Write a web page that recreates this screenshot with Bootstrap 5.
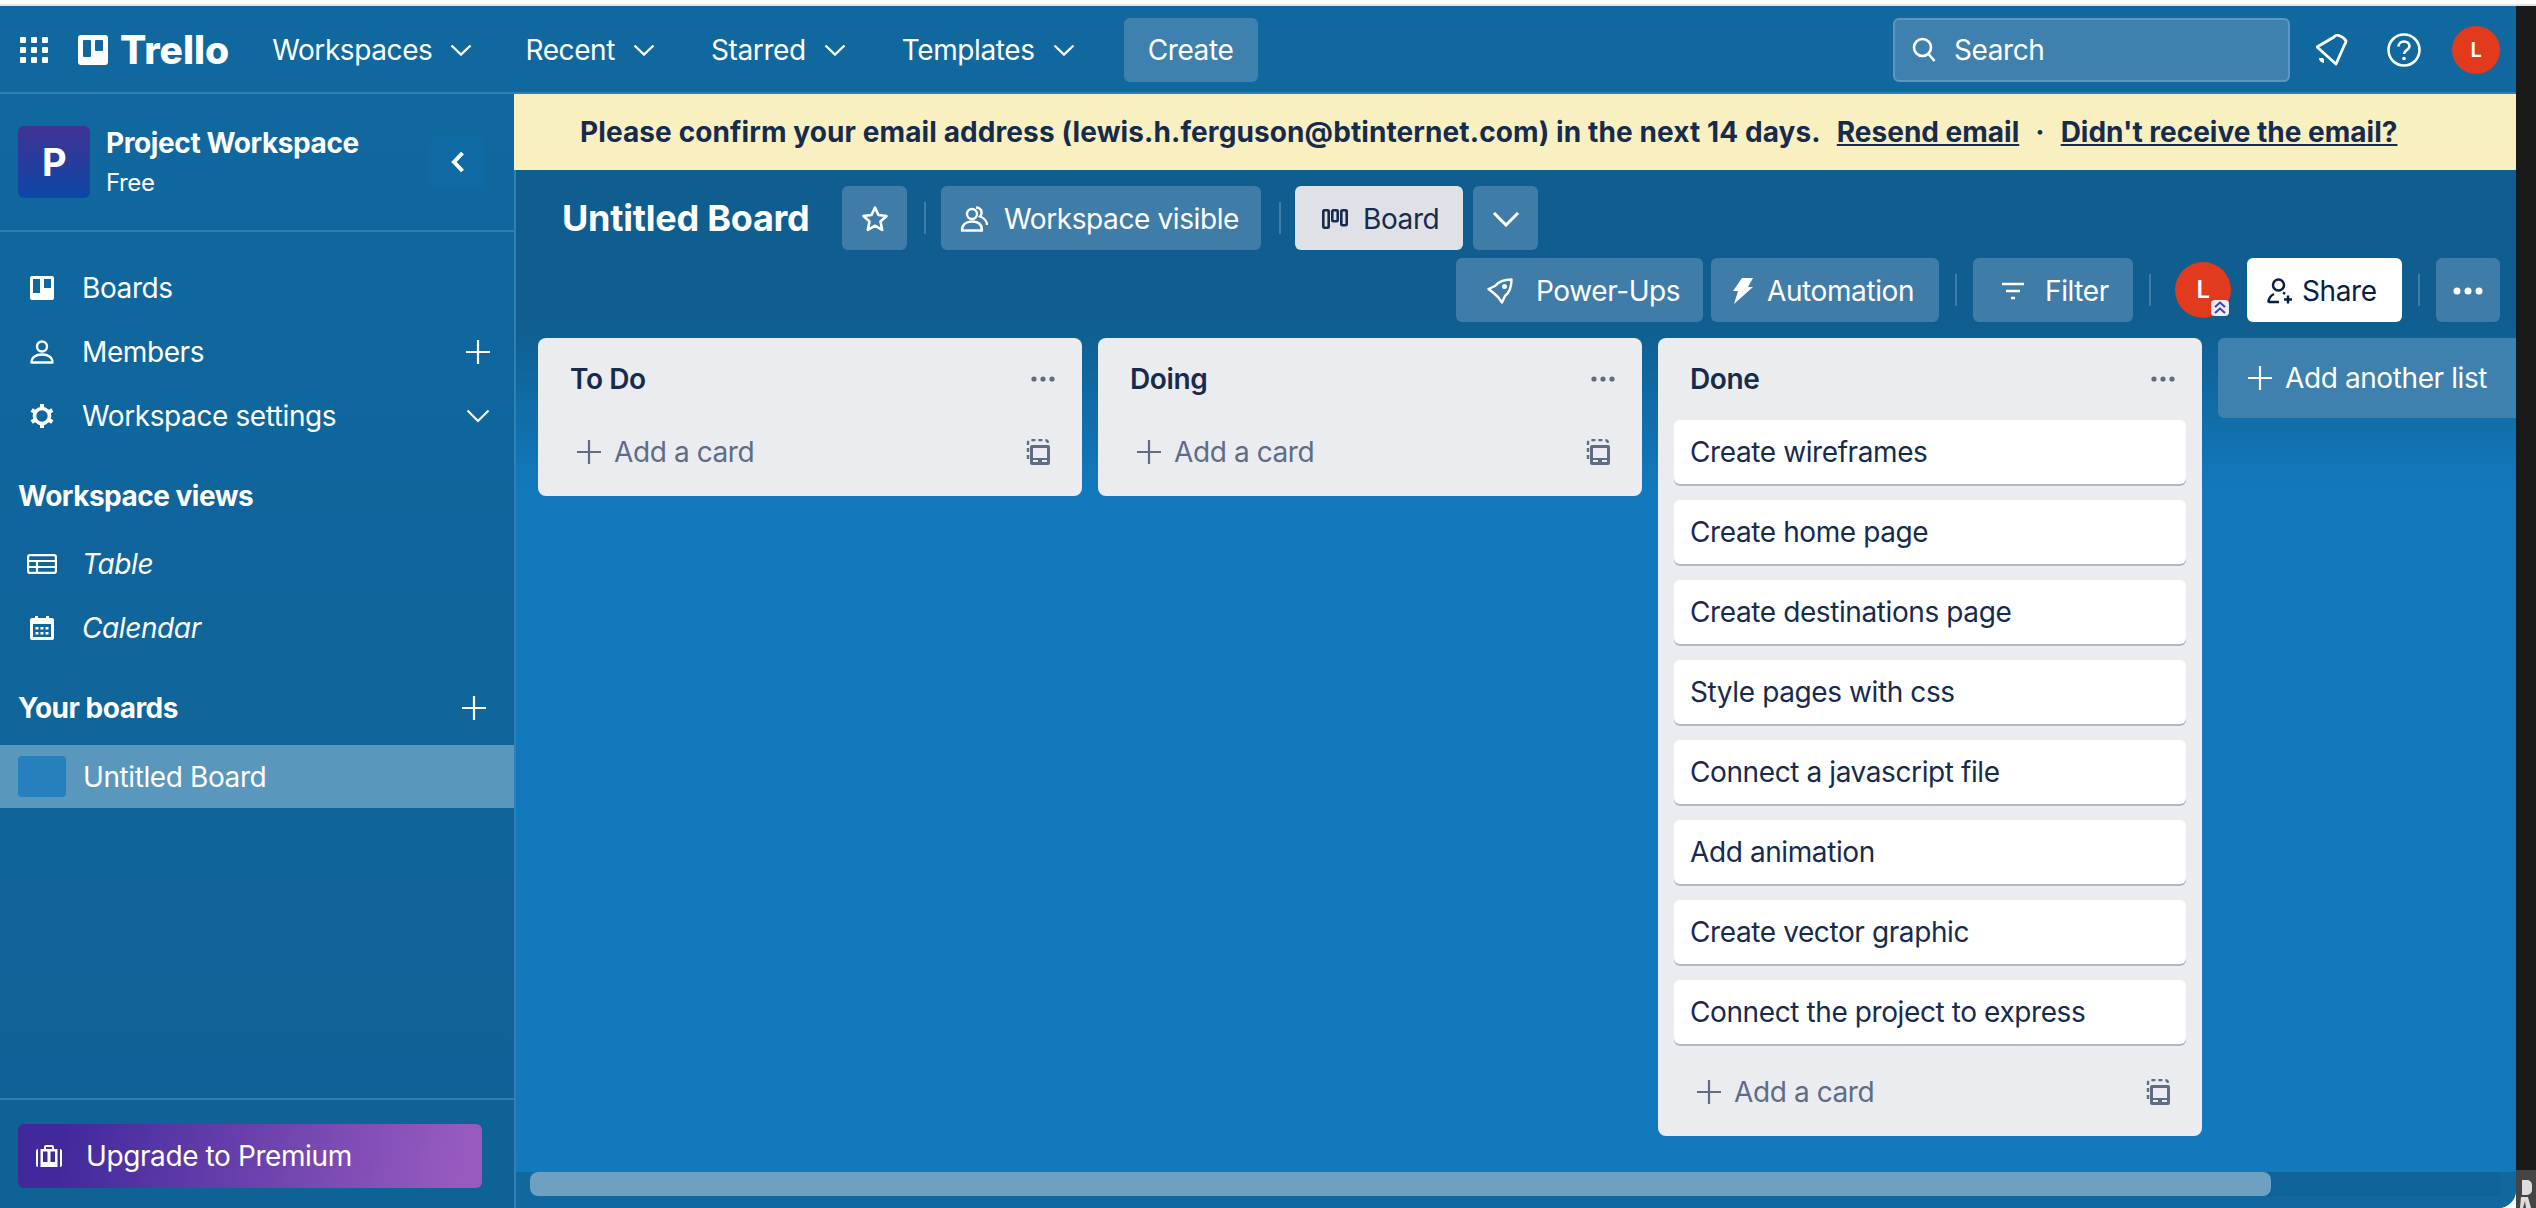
<!DOCTYPE html>
<html lang="en">
<head>
    <meta charset="UTF-8">
    <meta name="viewport" content="width=device-width, initial-scale=1.0">
    <title>Untitled Board | Trello</title>
    <link href="https://cdn.jsdelivr.net/npm/bootstrap@5.3.0/dist/css/bootstrap.min.css" rel="stylesheet">
    <style>
        html, body { height: 100%; }
        body { font-family: Inter, "Liberation Sans", sans-serif; font-size: 28px; line-height: 40px; letter-spacing: -0.4px; color: #fff; background: #fff; overflow: hidden; }
        button { letter-spacing: inherit; }
        svg { display: block; flex-shrink: 0; }
        .top-strip { height: 6px; border-top: 4px solid #fff; background: #e4e4e4; flex-shrink: 0; }
        .shell { height: 1202px; }
        .app { width: 2516px; background: #10679f; border-bottom-right-radius: 18px; overflow: hidden; }
        .side-strip { width: 20px; background: #1a1a1a; }
        .side-foot { height: 38px; background: #454545; padding: 10px 0 0 4px; }

        .topbar { height: 88px; padding: 2px 16px 0 20px; background: #10689f; border-bottom: 2px solid #2f7fb0; flex-shrink: 0; flex-wrap: nowrap; }
        .brand { margin-left: 30px; margin-right: 43px; padding: 0; color: #fff; font-size: 39px; font-weight: 800; line-height: 40px; letter-spacing: 0; gap: 12px; }
        .brand:hover { color: #fff; }
        .menu-item { color: #fff; margin-right: 56px; gap: 18px; padding: 0; }
        .menu-item:hover { color: #fff; }
        .brand + .menu-item { margin-right: 53px; }
        .create-btn { width: 134px; height: 64px; margin-left: -7px; background: #3f81ae; color: #fff; border: 0; border-radius: 6px; font-size: 28px; padding: 0; }
        .search-box { width: 397px; height: 64px; background: #3f81ae; border: 2px solid #5d97c1; border-radius: 6px; padding-left: 17px; gap: 18px; margin-right: 26px; }
        .bell-wrap { margin-right: 39px; }
        .help-wrap { margin-right: 31px; }
        .avatar-dot { background: #e13a1c; color: #fff; border-radius: 50%; font-weight: 600; }
        .avatar-top { width: 48px; height: 48px; font-size: 20px; }
        .avatar-board { width: 56px; height: 56px; font-size: 24px; margin: 0 16px 0 24px; position: relative; }
        .avatar-badge { position: absolute; right: 2px; bottom: 2px; width: 18px; height: 16px; background: #e9ecf3; border-radius: 4px; }

        .sidebar { width: 514px; background: linear-gradient(180deg, #10689f, #0f6296); flex-shrink: 0; }
        .ws-head { height: 138px; padding: 32px 28px 0 18px; border-bottom: 2px solid #2f7fb0; flex-shrink: 0; }
        .ws-tile { width: 72px; height: 72px; border-radius: 6px; background: linear-gradient(180deg, #403294, #0c47a6); font-size: 38px; font-weight: 700; }
        .ws-name { margin: -3px 0 0 16px; }
        .ws-title { font-weight: 700; line-height: 40px; }
        .ws-plan { font-size: 24px; line-height: 40px; }
        .collapse-btn { width: 56px; height: 56px; margin-top: 8px; background: #0f69a3; border-radius: 6px; }
        .side-list { padding-top: 24px; }
        .side-row { height: 64px; padding: 0 24px 0 30px; color: #fff; gap: 28px; background: transparent; border: 0; border-radius: 0; font-size: 28px; }
        .side-row .list-tail { margin-left: auto; }
        .side-head { height: 64px; padding: 0 28px 0 18px; font-weight: 700; margin-top: 16px; letter-spacing: -0.5px; }
        .views-list { margin-top: 4px; }
        .view-name { font-style: italic; }
        .board-row { height: 63px; margin-top: 5px; padding-left: 18px; gap: 17px; background: #5a97bd; }
        .board-tile { width: 48px; height: 41px; background: #2680bd; border-radius: 4px; }
        .side-foot-box { border-top: 2px solid #2f7fb0; padding: 24px 18px 20px; margin-top: auto; }
        .premium-btn { height: 64px; width: 464px; border: 0; border-radius: 6px; background: linear-gradient(100deg, #42299b 10%, #975bc0 95%); color: #fff; font-size: 28px; padding: 0 0 0 18px; gap: 24px; }

        .verify-bar { height: 76px; padding-left: 66px; background: #f9f0c2; color: #172b4d; font-weight: 700; letter-spacing: 0; flex-shrink: 0; white-space: nowrap; }
        .verify-bar a { color: #172b4d; }
        .verify-bar .dot-sep { margin: 0 16px; }
        .verify-bar .gap-link { margin-left: 16px; }
        .verify-bar .lead-text { letter-spacing: 0.1px; }
        .main-col { background: #10689f; min-width: 0; }
        .board-body { border-left: 2px solid #2f80b5; min-height: 0; }
        .board-head { padding: 16px 16px 0 46px; background: #0f5e8f; flex-shrink: 0; }
        .head-row { height: 64px; gap: 8px; }
        .head-row.second { margin-top: 8px; justify-content: flex-end; gap: 0; }
        .board-name { font-size: 36px; font-weight: 700; line-height: 64px; letter-spacing: -0.25px; margin: 0 24px 0 0; width: 248px; white-space: nowrap; }
        .tool-btn { height: 64px; background: #3f7da8; color: #fff; border: 0; border-radius: 6px; font-size: 28px; padding: 1px 0 0; white-space: nowrap; }
        .tool-btn:hover { background: #3f7da8; color: #fff; }
        .tool-sep { width: 2px; height: 32px; background: #3f7da8; flex-shrink: 0; }
        .star-btn { width: 65px; margin-right: 9px; }
        .wv-btn { width: 320px; padding-left: 19px; gap: 16px; margin: 0 10px 0 7px; }
        .view-btn { width: 168px; padding-left: 27px; gap: 15px; margin-left: 6px; background: #dfe1e6; color: #172b4d; }
        .view-btn:hover { background: #dfe1e6; color: #172b4d; }
        .drop-btn { width: 65px; margin-left: 2px; }
        .power-btn { width: 247px; padding-left: 31px; gap: 23px; margin-right: 8px; }
        .auto-btn { width: 228px; padding-left: 22px; gap: 14px; margin-right: 16px; }
        .filter-btn { width: 160px; padding-left: 28px; gap: 20px; margin-left: 16px; }
        .share-btn { width: 155px; padding-left: 20px; gap: 9px; margin-right: 16px; }
        .share-btn, .share-btn:hover { background: #fff; color: #091e42; }
        .more-btn { width: 64px; margin-left: 16px; }

        .canvas { flex: 1 1 auto; min-height: 0; padding: 16px 0 0 22px; gap: 16px; overflow: hidden; background: linear-gradient(180deg, #0f5e8f 0, #1279bd 170px); }
        .board-list { width: 544px; flex-shrink: 0; background: #ebecf0; border: 0; border-radius: 8px; color: #172b4d; padding: 0 16px 12px; }
        .list-title { height: 82px; padding: 0 11px 0 16px; font-weight: 600; }
        .list-cards { gap: 16px; margin-bottom: 16px; }
        .task-card { height: 64px; padding: 0 16px; border: 0; border-radius: 6px; background: #fff; box-shadow: 0 2px 0 #b3b7c6; color: #172b4d; flex-direction: row; align-items: center; }
        .add-card { height: 64px; padding: 0 16px 0 23px; color: #5e6c84; gap: 13px; }
        .add-card svg:last-child { margin-left: auto; }
        .add-list { width: 544px; height: 80px; flex-shrink: 0; background: #3f81ae; border: 0; border-radius: 6px; color: #fff; font-size: 28px; padding: 0 0 0 30px; gap: 13px; justify-content: flex-start; }
        .add-list:hover { background: #3f81ae; color: #fff; }
        .scroll-track { height: 24px; margin: 0 16px 12px 14px; background: #0f6399; border-radius: 8px; flex-shrink: 0; }
        .scroll-thumb { width: 1741px; height: 24px; background: #6ea1c1; border-radius: 8px; }
    </style>
</head>
<body class="d-flex flex-column">
    <div class="top-strip"></div>
    <div class="shell d-flex">
        <div class="app d-flex flex-column">
            <nav class="navbar topbar d-flex align-items-center justify-content-start">
                <svg width="28" height="26" viewBox="0 0 28 26" fill="#fff"><rect x="0" y="0" width="6" height="6" rx="1"/><rect x="11" y="0" width="6" height="6" rx="1"/><rect x="22" y="0" width="6" height="6" rx="1"/><rect x="0" y="10" width="6" height="6" rx="1"/><rect x="11" y="10" width="6" height="6" rx="1"/><rect x="22" y="10" width="6" height="6" rx="1"/><rect x="0" y="20" width="6" height="6" rx="1"/><rect x="11" y="20" width="6" height="6" rx="1"/><rect x="22" y="20" width="6" height="6" rx="1"/></svg>
                <a class="navbar-brand brand d-flex align-items-center" href="#">
                    <svg width="30" height="30" viewBox="0 0 30 30"><path fill="#fff" fill-rule="evenodd" d="M3 0h24a3 3 0 0 1 3 3v24a3 3 0 0 1-3 3H3a3 3 0 0 1-3-3V3a3 3 0 0 1 3-3zM6 5a1 1 0 0 0-1 1v15a1 1 0 0 0 1 1h6a1 1 0 0 0 1-1V6a1 1 0 0 0-1-1zM18 5a1 1 0 0 0-1 1v9a1 1 0 0 0 1 1h6a1 1 0 0 0 1-1V6a1 1 0 0 0-1-1z"/></svg>
                    Trello
                </a>
                <a class="nav-link menu-item d-flex align-items-center" href="#">Workspaces <svg width="22" height="12" viewBox="0 0 22 12" fill="none" stroke="#fff" stroke-width="2.4"><path d="M1.5 1.5 11 10.5l9.5-9"/></svg></a>
                <a class="nav-link menu-item d-flex align-items-center" href="#">Recent <svg width="22" height="12" viewBox="0 0 22 12" fill="none" stroke="#fff" stroke-width="2.4"><path d="M1.5 1.5 11 10.5l9.5-9"/></svg></a>
                <a class="nav-link menu-item d-flex align-items-center" href="#">Starred <svg width="22" height="12" viewBox="0 0 22 12" fill="none" stroke="#fff" stroke-width="2.4"><path d="M1.5 1.5 11 10.5l9.5-9"/></svg></a>
                <a class="nav-link menu-item d-flex align-items-center" href="#">Templates <svg width="22" height="12" viewBox="0 0 22 12" fill="none" stroke="#fff" stroke-width="2.4"><path d="M1.5 1.5 11 10.5l9.5-9"/></svg></a>
                <button class="btn create-btn">Create</button>
                <div class="search-box d-flex align-items-center ms-auto">
                    <svg width="24" height="26" viewBox="0 0 24 26" fill="none" stroke="#fff" stroke-width="2.6"><circle cx="10.5" cy="10.5" r="8.5"/><path d="m16.5 17 6 7"/></svg>
                    <span>Search</span>
                </div>
                <div class="bell-wrap">
                    <svg width="32" height="32" viewBox="0 0 32 32" fill="none" stroke="#fff" stroke-width="2.8" stroke-linejoin="round"><path d="M1 13 18 3c1-2 4-2 6-1 3 1 5 3 6 5 0 2-1 3-2 5l-8 18z"/><path d="M5 24a3 3 0 0 0 3 3" stroke-width="4"/></svg>
                </div>
                <div class="help-wrap">
                    <svg width="34" height="34" viewBox="0 0 34 34" fill="none" stroke="#fff" stroke-width="2.6"><circle cx="17" cy="17" r="15.5"/><path d="M11.5 13.5c0-3 2.500-5 5.500-5s5.500 2 5.500 4.800c0 4-5.500 3.700-5.500 7.700"/><circle cx="17" cy="25.500" r="1.800" fill="#fff" stroke="none"/></svg>
                </div>
                <div class="avatar-dot avatar-top d-flex align-items-center justify-content-center">L</div>
            </nav>
            <div class="d-flex flex-grow-1" style="min-height:0">
                <aside class="sidebar d-flex flex-column">
                    <div class="ws-head d-flex align-items-start">
                        <div class="ws-tile d-flex align-items-center justify-content-center">P</div>
                        <div class="ws-name">
                            <div class="ws-title">Project Workspace</div>
                            <div class="ws-plan">Free</div>
                        </div>
                        <div class="collapse-btn d-flex align-items-center justify-content-center ms-auto">
                            <svg width="14" height="22" viewBox="0 0 14 22" fill="none" stroke="#fff" stroke-width="4"><path d="M11.500 2 3 11l8.500 9"/></svg>
                        </div>
                    </div>
                    <div class="list-group side-list">
                        <a class="list-group-item side-row d-flex align-items-center" href="#">
                            <svg width="24" height="24" viewBox="0 0 24 24"><path fill="#fff" fill-rule="evenodd" d="M2 0h20a2 2 0 0 1 2 2v20a2 2 0 0 1-2 2H2a2 2 0 0 1-2-2V2a2 2 0 0 1 2-2zM3 3v14h7V3zM14 3v9h7V3z"/></svg>
                            <span>Boards</span>
                        </a>
                        <a class="list-group-item side-row d-flex align-items-center" href="#">
                            <svg width="24" height="24" viewBox="0 0 24 24" fill="none" stroke="#fff" stroke-width="2.400"><circle cx="12" cy="6.500" r="5"/><path d="M1.500 22.500c0-5 4-8 10.500-8s10.500 3 10.500 8z" stroke-linejoin="round"/></svg>
                            <span>Members</span>
                            <svg class="list-tail" width="24" height="24" viewBox="0 0 24 24" stroke="#fff" stroke-width="2.200"><path d="M12 0v24M0 12h24"/></svg>
                        </a>
                        <a class="list-group-item side-row d-flex align-items-center" href="#">
                            <svg width="24" height="24" viewBox="0 0 24 24" fill="none" stroke="#fff"><circle cx="12" cy="12" r="7.500" stroke-width="3.600"/><path stroke-width="4" d="M12 0v4M12 20v4M1.600 6l3.500 2M18.900 16l3.500 2M1.600 18l3.500-2M18.900 8l3.500-2"/></svg>
                            <span>Workspace settings</span>
                            <svg class="list-tail" width="24" height="14" viewBox="0 0 24 14" fill="none" stroke="#fff" stroke-width="2.200"><path d="M1.500 1.500 12 12 22.500 1.500"/></svg>
                        </a>
                    </div>
                    <div class="side-head d-flex align-items-center">Workspace views</div>
                    <div class="list-group views-list">
                        <a class="list-group-item side-row d-flex align-items-center" href="#">
                            <svg width="30" height="20" viewBox="0 0 30 20" fill="none" stroke="#fff" stroke-width="2.200" style="margin-left:-3px;margin-right:-3px"><rect x="1.100" y="1.100" width="27.800" height="17.800" rx="2"/><path d="M1 7h28M1 13h28M10 7v12" /></svg>
                            <span class="view-name">Table</span>
                        </a>
                        <a class="list-group-item side-row d-flex align-items-center" href="#">
                            <svg width="24" height="24" viewBox="0 0 24 24"><path fill="#fff" fill-rule="evenodd" d="M5 0h3v2h8V0h3v2h3a2 2 0 0 1 2 2v18a2 2 0 0 1-2 2H2a2 2 0 0 1-2-2V4a2 2 0 0 1 2-2h3zM3 8v13h18V8zM5.500 11h3v2.500h-3zM10.500 11h3v2.500h-3zM15.500 11h3v2.500h-3zM5.500 16h3v2.500h-3zM10.500 16h3v2.500h-3zM15.500 16h3v2.500h-3z"/></svg>
                            <span class="view-name">Calendar</span>
                        </a>
                    </div>
                    <div class="side-head d-flex align-items-center justify-content-between">
                        <span>Your boards</span>
                        <svg width="24" height="24" viewBox="0 0 24 24" stroke="#fff" stroke-width="2.200"><path d="M12 0v24M0 12h24"/></svg>
                    </div>
                    <a class="side-row board-row d-flex align-items-center text-decoration-none" href="#">
                        <div class="board-tile"></div>
                        <span>Untitled Board</span>
                    </a>
                    <div class="side-foot-box">
                        <button class="btn premium-btn d-flex align-items-center">
                            <svg width="26" height="22" viewBox="0 0 26 22"><path fill="#fff" fill-rule="evenodd" d="M8 2a2 2 0 0 1 2-2h6a2 2 0 0 1 2 2v2h3.500v18h-17V4H8zM10 2v2h6V2zM7 6.500V17h4.500V6.500zM14.500 6.500V17H19V6.500z"/><path fill="#fff" d="M0 6a2 2 0 0 1 2-2v18a2 2 0 0 1-2-2zM26 6a2 2 0 0 0-2-2v18a2 2 0 0 0 2-2z"/></svg>
                            <span>Upgrade to Premium</span>
                        </button>
                    </div>
                </aside>
                <main class="main-col d-flex flex-column flex-grow-1">
                    <div class="verify-bar d-flex align-items-center">
                        <span class="lead-text">Please confirm your email address (lewis.h.ferguson@btinternet.com) in the next 14 days.</span>
                        <a class="gap-link" href="#">Resend email</a>
                        <span class="dot-sep">·</span>
                        <a href="#">Didn't receive the email?</a>
                    </div>
                    <div class="board-body d-flex flex-column flex-grow-1">
                        <div class="board-head">
                            <div class="head-row d-flex align-items-center">
                                <h1 class="board-name">Untitled Board</h1>
                                <button class="btn tool-btn star-btn d-flex align-items-center justify-content-center">
                                    <svg width="28" height="28" viewBox="0 0 28 28" fill="none" stroke="#fff" stroke-width="2.600" stroke-linejoin="round"><path d="m14 2.500 3.500 7.500 8 1-6 5.500 1.700 8.500-7.200-4.300L6.800 25l1.700-8.500-6-5.500 8-1z"/></svg>
                                </button>
                                <div class="tool-sep"></div>
                                <button class="btn tool-btn wv-btn d-flex align-items-center">
                                    <svg width="28" height="26" viewBox="0 0 28 26" fill="none" stroke="#fff" stroke-width="2.400"><circle cx="12" cy="8" r="5"/><path d="M2 24.500c0-6 4-9 10-9s10 3 10 9z" stroke-linejoin="round"/><path d="M16 1.500c4 0 6 3 5.500 6-.2 1.500-1 2.500-1.500 3 4 1.500 7 5 7 8.500"/></svg>
                                    <span>Workspace visible</span>
                                </button>
                                <div class="tool-sep"></div>
                                <button class="btn tool-btn view-btn d-flex align-items-center">
                                    <svg width="26" height="20" viewBox="0 0 26 20" fill="none" stroke="#172b4d" stroke-width="2.600"><rect x="1.300" y="1.300" width="5.400" height="17.400" rx="1"/><rect x="10.300" y="1.300" width="5.400" height="11" rx="1"/><rect x="19.300" y="1.300" width="5.400" height="15" rx="1"/></svg>
                                    <span>Board</span>
                                </button>
                                <button class="btn tool-btn drop-btn d-flex align-items-center justify-content-center">
                                    <svg width="28" height="16" viewBox="0 0 28 16" fill="none" stroke="#fff" stroke-width="3"><path d="M2 2 14 14 26 2"/></svg>
                                </button>
                            </div>
                            <div class="head-row second d-flex align-items-center">
                                <button class="btn tool-btn power-btn d-flex align-items-center">
                                    <svg width="26" height="26" viewBox="0 0 26 26" fill="none" stroke="#fff" stroke-width="2.400" stroke-linejoin="round"><path d="M1.500 11 8 8C12 3 18 1.500 24.500 1.500 24.500 8 23 14 18 18l-3 6.500-4-5.500-5-4.500z"/><circle cx="17.500" cy="8.500" r="1.300" fill="#fff"/></svg>
                                    <span>Power-Ups</span>
                                </button>
                                <button class="btn tool-btn auto-btn d-flex align-items-center">
                                    <svg width="20" height="26" viewBox="0 0 20 26" fill="#fff"><path d="M9 0h11l-5 9h5L1 26l4-13H0z"/></svg>
                                    <span>Automation</span>
                                </button>
                                <div class="tool-sep"></div>
                                <button class="btn tool-btn filter-btn d-flex align-items-center">
                                    <svg width="24" height="20" viewBox="0 0 24 20" stroke="#fff" stroke-width="2.600"><path d="M1 3h22M5 10h14M10 17h4"/></svg>
                                    <span>Filter</span>
                                </button>
                                <div class="tool-sep ms-3"></div>
                                <div class="avatar-dot avatar-board d-flex align-items-center justify-content-center">
                                    L
                                    <div class="avatar-badge d-flex align-items-center justify-content-center">
                                        <svg width="14" height="14" viewBox="0 0 14 14" fill="none" stroke="#3d3fb5" stroke-width="2"><path d="m2 6 5-4.500L12 6M2 12l5-4.500 5 4.500"/></svg>
                                    </div>
                                </div>
                                <button class="btn tool-btn share-btn d-flex align-items-center">
                                    <svg width="26" height="26" viewBox="0 0 26 26" fill="none" stroke="#091e42" stroke-width="2.500"><circle cx="11.500" cy="7" r="5.500"/><path d="M1.500 24.500c0-4.500 2.500-7 5.500-8.500M1.500 24H12M16 14.500c.8.400 1.300.8 2 1.500M21 17.500V25.500M17 21.500h8"/></svg>
                                    <span>Share</span>
                                </button>
                                <div class="tool-sep"></div>
                                <button class="btn tool-btn more-btn d-flex align-items-center justify-content-center">
                                    <svg width="30" height="8" viewBox="0 0 30 8" fill="#fff"><circle cx="4" cy="4" r="3.500"/><circle cx="15" cy="4" r="3.500"/><circle cx="26" cy="4" r="3.500"/></svg>
                                </button>
                            </div>
                        </div>
                        <div class="canvas d-flex align-items-start" id="canvas"></div>
                        <div class="scroll-track"><div class="scroll-thumb"></div></div>
                    </div>
                </main>
            </div>
        </div>
        <div class="side-strip d-flex flex-column">
            <div class="flex-grow-1"></div>
            <div class="side-foot">
                <svg width="14" height="28" viewBox="0 0 14 28"><path fill="#ddd" d="M2 0h5a5 5 0 0 1 5 5v5a5 5 0 0 1-5 5H2zM1 17h7l3 11H6l-1-7-2 7H0z"/></svg>
            </div>
        </div>
    </div>

    <script>
        var lists = [
            { name: 'To Do', cards: [] },
            { name: 'Doing', cards: [] },
            { name: 'Done', cards: ['Create wireframes', 'Create home page', 'Create destinations page', 'Style pages with css', 'Connect a javascript file', 'Add animation', 'Create vector graphic', 'Connect the project to express'] }
        ];
        var plus = '<svg width="24" height="24" viewBox="0 0 24 24" stroke="#5e6c84" stroke-width="2.200"><path d="M12 0v24M0 12h24"/></svg>';
        var template = '<svg width="24" height="26" viewBox="0 0 24 26"><path fill="none" stroke="#5e6c84" stroke-width="2.400" stroke-dasharray="4 3" d="M2 20V4a3 3 0 0 1 3-3h14a3 3 0 0 1 3 3"/><path fill="#5e6c84" fill-rule="evenodd" d="M8 6h14a2 2 0 0 1 2 2v16a2 2 0 0 1-2 2H6a2 2 0 0 1-2-2V8a2 2 0 0 1 2-2zM7 9v10h14V9zM7 21v2h5v-2zM16 21v2h5v-2z"/></svg>';
        var dots = '<svg width="24" height="6" viewBox="0 0 24 6" fill="#5e6c84"><circle cx="3" cy="3" r="2.600"/><circle cx="12" cy="3" r="2.600"/><circle cx="21" cy="3" r="2.600"/></svg>';
        var html = '';
        lists.forEach(function (list) {
            var cards = list.cards.map(function (c) { return '<div class="card task-card">' + c + '</div>'; }).join('');
            html += '<div class="card board-list">'
                + '<div class="list-title d-flex align-items-center justify-content-between"><span>' + list.name + '</span>' + dots + '</div>'
                + (cards ? '<div class="list-cards d-flex flex-column">' + cards + '</div>' : '')
                + '<div class="add-card d-flex align-items-center">' + plus + '<span>Add a card</span>' + template + '</div>'
                + '</div>';
        });
        html += '<button class="btn add-list d-flex align-items-center"><svg width="24" height="24" viewBox="0 0 24 24" stroke="#fff" stroke-width="2.200"><path d="M12 0v24M0 12h24"/></svg><span>Add another list</span></button>';
        document.getElementById('canvas').innerHTML = html;
    </script>
    <script src="https://cdn.jsdelivr.net/npm/bootstrap@5.3.0/dist/js/bootstrap.bundle.min.js"></script>
</body>
</html>
